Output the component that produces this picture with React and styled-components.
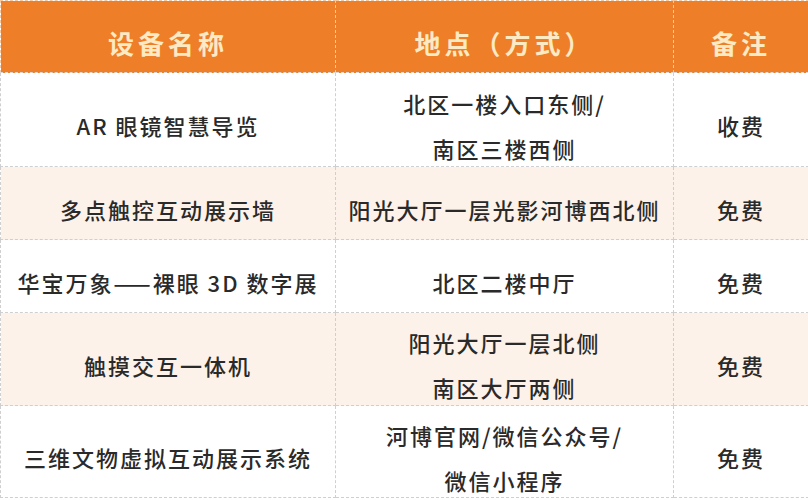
import React from 'react';
import styled, { createGlobalStyle } from 'styled-components';

const GlobalStyle = createGlobalStyle`
  html, body {
    margin: 0;
    padding: 0;
    background: #ffffff;
  }
  body {
    font-family: "Noto Sans CJK SC", "Noto Sans", sans-serif;
  }
`;

const rows = [
    { name: 'AR 眼镜智慧导览', place: ['北区一楼入口东侧/', '南区三楼西侧'], note: '收费', height: 94 },
    { name: '多点触控互动展示墙', place: ['阳光大厅一层光影河博西北侧'], note: '免费', height: 73 },
    { name: '华宝万象——裸眼 3D 数字展', place: ['北区二楼中厅'], note: '免费', height: 73 },
    { name: '触摸交互一体机', place: ['阳光大厅一层北侧', '南区大厅两侧'], note: '免费', height: 93 },
    { name: '三维文物虚拟互动展示系统', place: ['河博官网/微信公众号/', '微信小程序'], note: '免费', height: 92 },
];

const Table = styled.table`
  width: 808px;
  border-collapse: collapse;
  table-layout: fixed;
  border: 1px dashed #cfcfcf;
`;

const HeadCell = styled.th`
  width: ${props => props.w}px;
  height: 72px;
  padding: 12px 0 0;
  background: #ee7e27;
  color: #fbeac4;
  font-family: "Noto Sans CJK SC", sans-serif;
  font-weight: 700;
  font-size: 26px;
  letter-spacing: 4px;
  text-align: center;
  vertical-align: middle;
  border: 1px dashed #f6c9a0;
  border-bottom-color: #d9d9d9;
  box-sizing: border-box;
`;

const Row = styled.tr`
  background: ${props => (props.odd ? '#fdf2e9' : '#ffffff')};
`;

const Cell = styled.td`
  padding: 0;
  border: 1px dashed #cfcfcf;
`;

const CellBox = styled.div`
  height: ${props => props.h}px;
  box-sizing: border-box;
  padding-top: 12px;
  display: flex;
  flex-direction: column;
  justify-content: center;
  align-items: center;
  color: #2a2a2a;
  font-size: 22px;
  font-weight: 500;
  letter-spacing: 2px;
  line-height: 45px;
  white-space: nowrap;
`;

const Line = styled.div`
  display: block;
`;

export default function App() {
    return (
        <>
            <GlobalStyle />
            <Table>
                <thead>
                    <tr>
                        <HeadCell w={335}>设备名称</HeadCell>
                        <HeadCell w={338}>地点（方式）</HeadCell>
                        <HeadCell w={135}>备注</HeadCell>
                    </tr>
                </thead>
                <tbody>
                    {rows.map((row, index) => (
                        <Row key={row.name} odd={index % 2 === 1}>
                            <Cell><CellBox h={row.height - 1}>{row.name}</CellBox></Cell>
                            <Cell>
                                <CellBox h={row.height - 1}>
                                    {row.place.map(p => <Line key={p}>{p}</Line>)}
                                </CellBox>
                            </Cell>
                            <Cell><CellBox h={row.height - 1}>{row.note}</CellBox></Cell>
                        </Row>
                    ))}
                </tbody>
            </Table>
        </>
    );
}
